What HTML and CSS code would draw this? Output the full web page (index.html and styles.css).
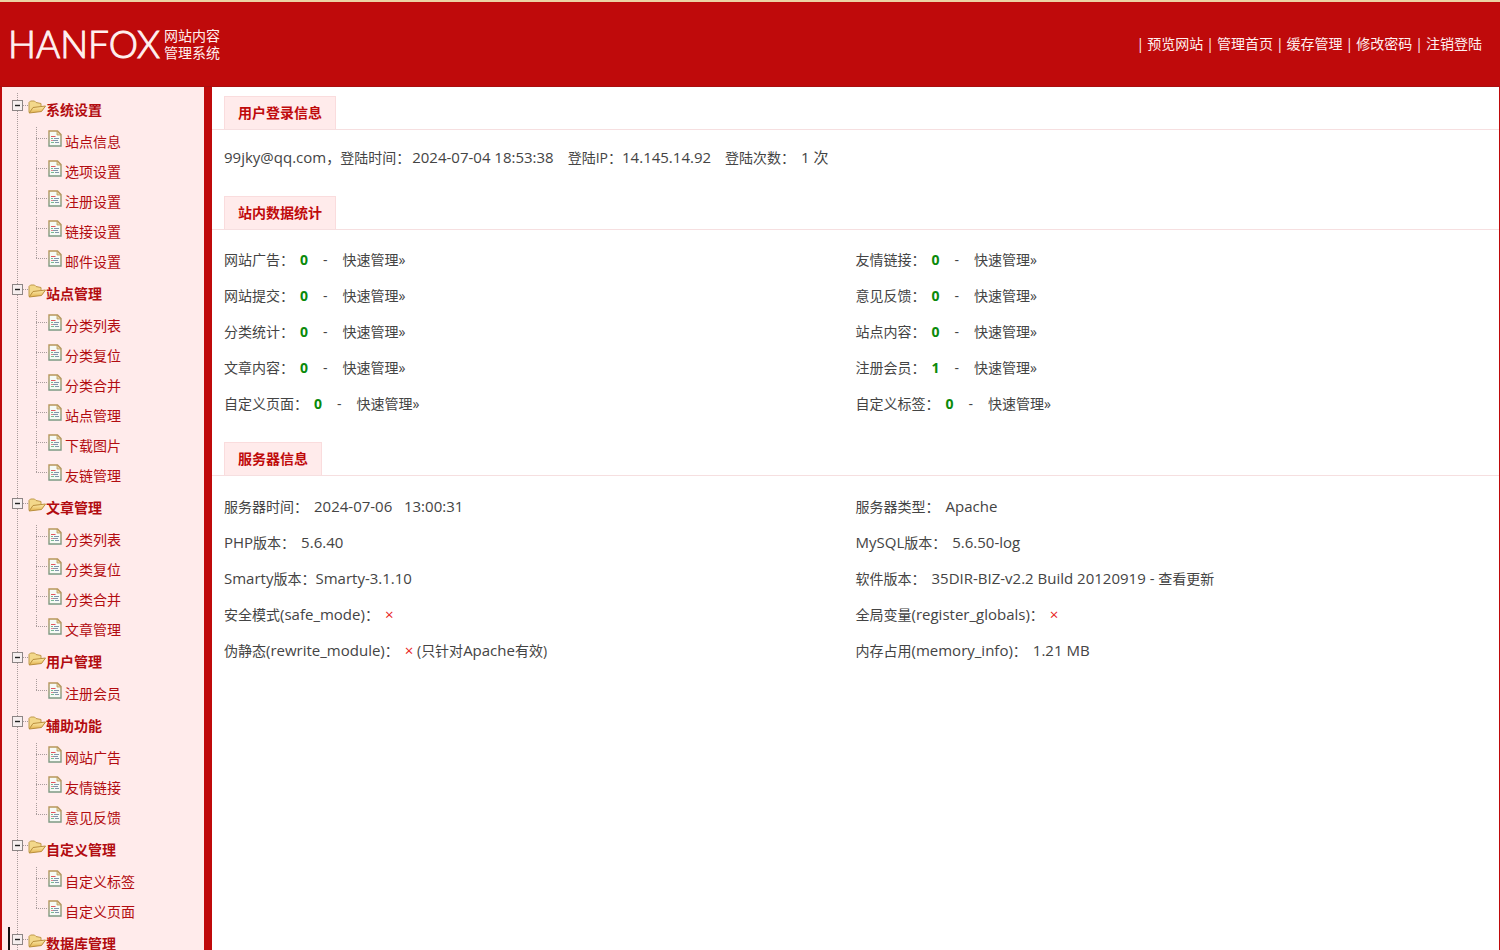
FILE: index.html
```html
<!DOCTYPE html>
<html lang="zh-CN">
<head>
<meta charset="utf-8">
<title>HANFOX 网站内容管理系统</title>
<link rel="stylesheet" href="styles.css">
</head>
<body>
<svg class="defs" aria-hidden="true">
  <defs>
    <linearGradient id="gold" x1="0" y1="0" x2="0" y2="1"><stop offset="0" stop-color="#fdeeb0"/><stop offset="1" stop-color="#e3b24e"/></linearGradient>
    <linearGradient id="edge" x1="0" y1="0" x2="0" y2="1"><stop offset="0" stop-color="#b8975a"/><stop offset="1" stop-color="#7d9a85"/></linearGradient>
    <symbol id="minus" viewBox="0 0 11 11">
      <rect x=".5" y=".5" width="10" height="10" fill="#f6eeee" stroke="#8d8585"/>
      <path d="M3 5.500h5" stroke="#222" stroke-width="1.400"/>
    </symbol>
    <symbol id="folder" viewBox="0 0 18 14">
      <path d="M1 12.500V2.500L2.500 1h4L8 2.500l5 1V6" fill="#f3d88b" stroke="#c09a4c"/>
      <path d="M1.200 13 5 7.500 17.500 6 13.500 11.500z" fill="url(#gold)" stroke="#b98e3c" stroke-linejoin="round"/>
    </symbol>
    <symbol id="page" viewBox="0 0 14 17">
      <path d="M1 1h8.500L13 4.500V16H1z" fill="#f6faf6" stroke="url(#edge)" stroke-width="1.400"/>
      <path d="M9 1v4h4z" fill="#e5d3a0" stroke="#b8975a" stroke-width=".8"/>
      <path d="M3 6.500h4.500" stroke="#e0565c"/>
      <path d="M3 8.500h2M3 12.500h3" stroke="#78b894"/>
      <path d="M6 8.500h5M5 10.500h5M7 12.500h4" stroke="#8296ab"/>
      <path d="M3 10.500h2" stroke="#e0868a"/>
    </symbol>
  </defs>
</svg>
<header class="top">
  <h1 class="logo"><span class="brand">HANFOX</span><span class="tagline">网站内容<br>管理系统</span></h1>
  <nav class="top-nav">
    <i>|</i><a href="#">预览网站</a><i>|</i><a href="#">管理首页</a><i>|</i><a href="#">缓存管理</a><i>|</i><a href="#">修改密码</a><i>|</i><a href="#">注销登陆</a>
  </nav>
</header>
<div class="shell">
  <nav class="side">
    <section class="group">
      <h2><button type="button" aria-label="折叠"><svg><use href="#minus"/></svg></button><svg class="folder"><use href="#folder"/></svg>系统设置</h2>
      <ul>
        <li><svg><use href="#page"/></svg><a href="#">站点信息</a></li>
        <li><svg><use href="#page"/></svg><a href="#">选项设置</a></li>
        <li><svg><use href="#page"/></svg><a href="#">注册设置</a></li>
        <li><svg><use href="#page"/></svg><a href="#">链接设置</a></li>
        <li><svg><use href="#page"/></svg><a href="#">邮件设置</a></li>
      </ul>
    </section>
    <section class="group">
      <h2><button type="button" aria-label="折叠"><svg><use href="#minus"/></svg></button><svg class="folder"><use href="#folder"/></svg>站点管理</h2>
      <ul>
        <li><svg><use href="#page"/></svg><a href="#">分类列表</a></li>
        <li><svg><use href="#page"/></svg><a href="#">分类复位</a></li>
        <li><svg><use href="#page"/></svg><a href="#">分类合并</a></li>
        <li><svg><use href="#page"/></svg><a href="#">站点管理</a></li>
        <li><svg><use href="#page"/></svg><a href="#">下载图片</a></li>
        <li><svg><use href="#page"/></svg><a href="#">友链管理</a></li>
      </ul>
    </section>
    <section class="group">
      <h2><button type="button" aria-label="折叠"><svg><use href="#minus"/></svg></button><svg class="folder"><use href="#folder"/></svg>文章管理</h2>
      <ul>
        <li><svg><use href="#page"/></svg><a href="#">分类列表</a></li>
        <li><svg><use href="#page"/></svg><a href="#">分类复位</a></li>
        <li><svg><use href="#page"/></svg><a href="#">分类合并</a></li>
        <li><svg><use href="#page"/></svg><a href="#">文章管理</a></li>
      </ul>
    </section>
    <section class="group">
      <h2><button type="button" aria-label="折叠"><svg><use href="#minus"/></svg></button><svg class="folder"><use href="#folder"/></svg>用户管理</h2>
      <ul>
        <li><svg><use href="#page"/></svg><a href="#">注册会员</a></li>
      </ul>
    </section>
    <section class="group">
      <h2><button type="button" aria-label="折叠"><svg><use href="#minus"/></svg></button><svg class="folder"><use href="#folder"/></svg>辅助功能</h2>
      <ul>
        <li><svg><use href="#page"/></svg><a href="#">网站广告</a></li>
        <li><svg><use href="#page"/></svg><a href="#">友情链接</a></li>
        <li><svg><use href="#page"/></svg><a href="#">意见反馈</a></li>
      </ul>
    </section>
    <section class="group">
      <h2><button type="button" aria-label="折叠"><svg><use href="#minus"/></svg></button><svg class="folder"><use href="#folder"/></svg>自定义管理</h2>
      <ul>
        <li><svg><use href="#page"/></svg><a href="#">自定义标签</a></li>
        <li><svg><use href="#page"/></svg><a href="#">自定义页面</a></li>
      </ul>
    </section>
    <section class="group current">
      <h2><button type="button" aria-label="折叠"><svg><use href="#minus"/></svg></button><svg class="folder"><use href="#folder"/></svg>数据库管理</h2>
    </section>
  </nav>
  <main class="main">
    <section class="panel">
      <div class="tabbar"><h3>用户登录信息</h3></div>
      <p class="login"><span class="value">99jky@qq.com</span>，登陆时间：<span class="value stamp">2024-07-04 18:53:38</span><span class="field">登陆IP：</span><span class="value">14.145.14.92</span><span class="field">登陆次数：</span><span class="value count">1 次</span></p>
    </section>
    <section class="panel">
      <div class="tabbar"><h3>站内数据统计</h3></div>
      <table>
        <tr><td>网站广告：<strong>0</strong><span class="dash">-</span><a href="#">快速管理»</a></td><td>友情链接：<strong>0</strong><span class="dash">-</span><a href="#">快速管理»</a></td></tr>
        <tr><td>网站提交：<strong>0</strong><span class="dash">-</span><a href="#">快速管理»</a></td><td>意见反馈：<strong>0</strong><span class="dash">-</span><a href="#">快速管理»</a></td></tr>
        <tr><td>分类统计：<strong>0</strong><span class="dash">-</span><a href="#">快速管理»</a></td><td>站点内容：<strong>0</strong><span class="dash">-</span><a href="#">快速管理»</a></td></tr>
        <tr><td>文章内容：<strong>0</strong><span class="dash">-</span><a href="#">快速管理»</a></td><td>注册会员：<strong>1</strong><span class="dash">-</span><a href="#">快速管理»</a></td></tr>
        <tr><td>自定义页面：<strong>0</strong><span class="dash">-</span><a href="#">快速管理»</a></td><td>自定义标签：<strong>0</strong><span class="dash">-</span><a href="#">快速管理»</a></td></tr>
      </table>
    </section>
    <section class="panel">
      <div class="tabbar"><h3>服务器信息</h3></div>
      <table class="info">
        <tr><td>服务器时间：<span class="value">2024-07-06 &nbsp; 13:00:31</span></td><td>服务器类型：<span class="value">Apache</span></td></tr>
        <tr><td><span class="latin">PHP</span>版本：<span class="value">5.6.40</span></td><td><span class="latin">MySQL</span>版本：<span class="value">5.6.50-log</span></td></tr>
        <tr><td><span class="latin">Smarty</span>版本：<span class="latin">Smarty-3.1.10</span></td><td>软件版本：<span class="value">35DIR-BIZ-v2.2 Build 20120919 - </span><a href="#">查看更新</a></td></tr>
        <tr><td>安全模式<span class="latin">(safe_mode)</span>：<span class="value off">×</span></td><td>全局变量<span class="latin">(register_globals)</span>：<span class="value off">×</span></td></tr>
        <tr><td>伪静态<span class="latin">(rewrite_module)</span>：<span class="value off">×</span> (只针对<span class="latin">Apache</span>有效)</td><td>内存占用<span class="latin">(memory_info)</span>：<span class="value">1.21 MB</span></td></tr>
      </table>
    </section>
  </main>
</div>
</body>
</html>
```
FILE: styles.css
```css
* {
  box-sizing: border-box;
}

body {
  margin: 0;
  height: 100vh;
  display: flex;
  flex-direction: column;
  overflow: hidden;
  background: #bf0a0b;
  color: #444;
  font: 14px/20px "Open Sans", "Noto Sans CJK SC", sans-serif;
}

h1, h2, h3, p, ul {
  margin: 0;
  padding: 0;
  font-size: 14px;
}

ul {
  list-style: none;
}

a {
  color: inherit;
  text-decoration: none;
}

.defs {
  position: absolute;
  width: 0;
  height: 0;
}

.top {
  flex: none;
  height: 87px;
  display: flex;
  align-items: center;
  justify-content: space-between;
  padding: 0 18px 0 8px;
  border-top: 2px solid #ecd3a4;
  border-bottom: 1px solid #a80f10;
  color: #fff0f0;
}

.logo {
  display: flex;
  align-items: center;
  gap: 4px;
  font-weight: 400;
}

.brand {
  font: 300 37px/40px Lato, sans-serif;
  -webkit-text-stroke: 1px #fff0f0;
}

.tagline {
  font-weight: 400;
  line-height: 17px;
}

.top-nav {
  display: flex;
}

.top-nav i {
  font-style: normal;
  margin: 0 3px;
}

.shell {
  flex: 1;
  min-height: 0;
  display: flex;
  padding: 0 1px 0 2px;
}

.side {
  flex: none;
  width: 202px;
  padding-top: 6px;
  overflow: hidden;
  background: #ffebeb;
  color: #b20c10;
}

.group {
  background: repeating-linear-gradient(#a99c9c 0 1px, transparent 1px 2px) 15px 0 / 1px 100% no-repeat;
}

.group h2 {
  display: flex;
  align-items: flex-start;
  height: 34px;
  padding-left: 10px;
  line-height: 34px;
  background: repeating-linear-gradient(90deg, #a99c9c 0 1px, transparent 1px 2px) 21px 12px / 5px 1px no-repeat;
}

.group button {
  display: block;
  margin: 7px 5px 0 0;
  padding: 0;
  border: 0;
  background: none;
}

.group button svg {
  display: block;
  width: 11px;
  height: 11px;
}

.folder {
  width: 18px;
  height: 14px;
  margin-top: 7px;
}

.group li {
  display: flex;
  align-items: flex-start;
  height: 30px;
  padding-left: 46px;
  gap: 3px;
  line-height: 30px;
  background:
    repeating-linear-gradient(#a99c9c 0 1px, transparent 1px 2px) 34px 0 / 1px 28px no-repeat,
    repeating-linear-gradient(90deg, #a99c9c 0 1px, transparent 1px 2px) 34px 11px / 11px 1px no-repeat;
}

.group li:last-child {
  background-size: 1px 12px, 11px 1px;
}

.group li svg {
  width: 14px;
  height: 17px;
  margin-top: 3px;
}

.current {
  border-left: 2px solid #111;
  margin-left: 6px;
  background-position: 7px 0;
}

.current h2 {
  padding-left: 2px;
  background-position: 13px 12px;
}

.main {
  flex: 1;
  margin-left: 8px;
  padding-top: 9px;
  overflow: hidden;
  background: #fff;
}

.panel {
  padding-bottom: 20px;
}

.tabbar {
  display: flex;
  padding-left: 12px;
  border-bottom: 1px solid #f6dfe0;
}

.tabbar h3 {
  padding: 6px 13px;
  border: 1px solid #fadcdd;
  border-bottom: 0;
  background: #ffebeb;
  color: #bf0a0b;
}

.login {
  padding: 10px 12px 0;
  line-height: 36px;
}

.field {
  margin-left: 14px;
}

.stamp {
  margin-left: 2px;
}

.count {
  margin-left: 6px;
}

.value,
.latin {
  font-size: 15px;
  line-height: 20px;
}

table {
  width: calc(100% - 24px);
  margin: 12px 12px 0;
  border-collapse: collapse;
  table-layout: fixed;
}

td {
  height: 36px;
  padding: 0;
}

td strong {
  margin-left: 6px;
  color: #0a8a0a;
}

.dash {
  margin: 0 15px;
}

.info .value {
  margin-left: 6px;
}

.value.off {
  color: #e81c1c;
}
```
